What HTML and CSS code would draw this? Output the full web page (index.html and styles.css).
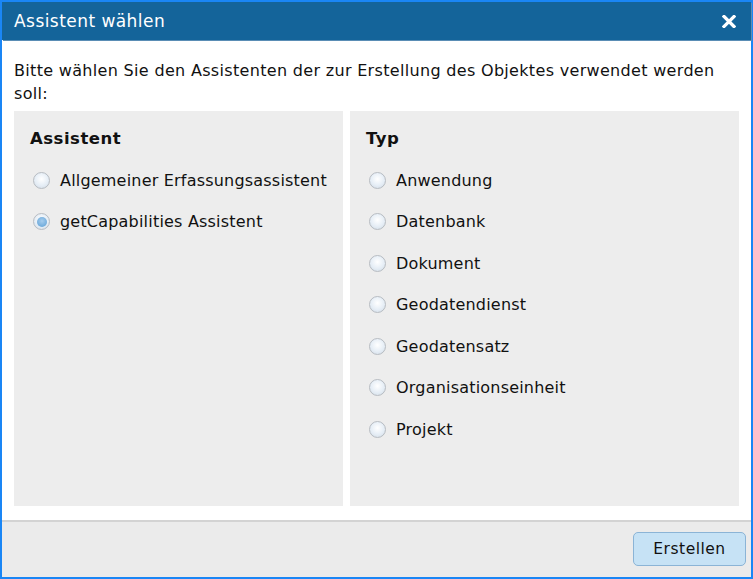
FILE: index.html
```html
<!DOCTYPE html>
<html lang="de">
<head>
<meta charset="utf-8">
<title>Assistent wählen</title>
<link rel="stylesheet" href="styles.css">
</head>
<body>
<div class="dialog">
  <div class="titlebar">
    <span class="title">Assistent wählen</span>
    <svg class="close" width="14" height="13" viewBox="0 0 14 13" aria-label="Schließen">
      <path d="M2 1.5 L12 11.5 M12 1.5 L2 11.5" stroke="#ffffff" stroke-width="3.2" stroke-linecap="square" fill="none"/>
    </svg>
  </div>
  <div class="content">
    <p class="intro">Bitte wählen Sie den Assistenten der zur Erstellung des Objektes verwendet werden soll:</p>
    <div class="panels">
      <div class="panel panel-left">
        <h3 class="panel-head">Assistent</h3>
        <label class="opt"><span class="radio"></span>Allgemeiner Erfassungsassistent</label>
        <label class="opt"><span class="radio checked"></span>getCapabilities Assistent</label>
      </div>
      <div class="panel panel-right">
        <h3 class="panel-head">Typ</h3>
        <label class="opt"><span class="radio"></span>Anwendung</label>
        <label class="opt"><span class="radio"></span>Datenbank</label>
        <label class="opt"><span class="radio"></span>Dokument</label>
        <label class="opt"><span class="radio"></span>Geodatendienst</label>
        <label class="opt"><span class="radio"></span>Geodatensatz</label>
        <label class="opt"><span class="radio"></span>Organisationseinheit</label>
        <label class="opt"><span class="radio"></span>Projekt</label>
      </div>
    </div>
  </div>
  <div class="footer">
    <button class="btn">Erstellen</button>
  </div>
</div>
</body>
</html>
```
FILE: styles.css
```css
html, body {
  margin: 0;
  padding: 0;
  background: #ffffff;
}
body {
  font-family: "DejaVu Sans", Verdana, sans-serif;
  color: #111;
}
.dialog {
  width: 753px;
  height: 579px;
  box-sizing: border-box;
  border: 2px solid #1a86f5;
  display: flex;
  flex-direction: column;
  background: #fff;
}
.titlebar {
  height: 38px;
  background: #14649a;
  box-shadow: 1px 1px 0 #5a8db5;
  display: flex;
  align-items: center;
  justify-content: space-between;
  padding: 0 15px 0 12px;
  color: #fff;
  flex: none;
}
.title {
  font-size: 17px;
  letter-spacing: 0.45px;
}
.close {
  display: block;
}
.content {
  flex: 1;
  padding: 0 12px 0 12px;
  display: flex;
  flex-direction: column;
}
.intro {
  margin: 19px 0 6px 0;
  font-size: 16px;
  letter-spacing: 0.32px;
  line-height: 23px;
}
.panels {
  display: flex;
  gap: 7px;
  height: 395px;
}
.panel {
  background: #ededed;
  padding: 16px 16px;
  box-sizing: border-box;
  display: flex;
  flex-direction: column;
}
.panel-left { width: 329px; }
.panel-right { width: 389px; }
.panel-head {
  margin: 0 0 19px 0;
  font-size: 16.5px;
  font-weight: bold;
  letter-spacing: 0.5px;
  line-height: 24px;
}
.opt {
  display: flex;
  align-items: center;
  font-size: 16px;
  letter-spacing: 0.2px;
  white-space: nowrap;
  height: 20px;
  margin-bottom: 21.6px;
}
.radio {
  width: 17px;
  height: 17px;
  border-radius: 50%;
  border: 1px solid #b7bcc2;
  background: radial-gradient(circle at 50% 40%, #ffffff 0%, #e6eef6 55%, #d0d9e3 100%);
  margin: 0 10px 0 3px;
  box-sizing: border-box;
  flex: none;
  position: relative;
}
.radio.checked::after {
  content: "";
  position: absolute;
  left: 2.5px;
  top: 2.5px;
  width: 10px;
  height: 10px;
  border-radius: 50%;
  background: radial-gradient(circle at 50% 40%, #a6cdee 0%, #5c9fd4 100%);
}
.footer {
  margin-top: 14px;
  border-top: 2px solid #d3d3d3;
  background: #ebebeb;
  flex: 1;
  display: flex;
  justify-content: flex-end;
  align-items: flex-start;
  padding: 10px 5px 0 0;
}
.btn {
  width: 113px;
  height: 34px;
  background: #c6e2f5;
  border: 1px solid #8bb4d6;
  border-radius: 5px;
  font-family: "DejaVu Sans", Verdana, sans-serif;
  font-size: 15.5px;
  letter-spacing: 0.5px;
  color: #111;
  padding: 0;
}
```
